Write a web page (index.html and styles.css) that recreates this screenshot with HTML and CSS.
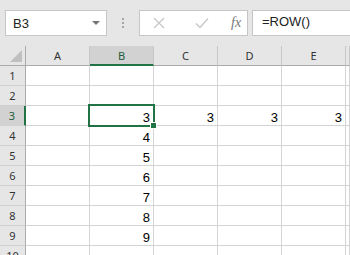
FILE: index.html
```html
<!DOCTYPE html>
<html lang="en">
<head>
    <meta charset="UTF-8">
    <title>Sheet - ROW()</title>
    <link rel="stylesheet" href="styles.css">
</head>
<body>
    <!-- Formula bar -->
    <div class="toolbar">
        <div class="name-box">
            <span>B3</span>
            <span class="caret"></span>
        </div>
        <div class="grip"><i></i><i></i><i></i></div>
        <div class="actions">
            <svg width="12" height="12" viewBox="0 0 12 12"><path d="M1 1L11 11M11 1L1 11" stroke="#c8c8c8" stroke-width="1.4" fill="none"/></svg>
            <svg width="14" height="12" viewBox="0 0 14 12"><path d="M1 6.5L5 10.5L13 1.5" stroke="#c8c8c8" stroke-width="1.4" fill="none"/></svg>
            <span class="fx">fx</span>
        </div>
        <div class="formula">=ROW()</div>
    </div>

    <!-- Grid -->
    <div class="sheet">
        <div class="corner"><span></span></div>
        <div class="col-head">A</div>
        <div class="col-head active">B</div>
        <div class="col-head">C</div>
        <div class="col-head">D</div>
        <div class="col-head">E</div>
        <div class="col-head"></div>

        <div class="row-head">1</div>
        <div class="cell"></div><div class="cell"></div><div class="cell"></div><div class="cell"></div><div class="cell"></div><div class="cell"></div>

        <div class="row-head">2</div>
        <div class="cell"></div><div class="cell"></div><div class="cell"></div><div class="cell"></div><div class="cell"></div><div class="cell"></div>

        <div class="row-head active">3</div>
        <div class="cell"></div><div class="cell">3</div><div class="cell">3</div><div class="cell">3</div><div class="cell">3</div><div class="cell"></div>

        <div class="row-head">4</div>
        <div class="cell"></div><div class="cell">4</div><div class="cell"></div><div class="cell"></div><div class="cell"></div><div class="cell"></div>

        <div class="row-head">5</div>
        <div class="cell"></div><div class="cell">5</div><div class="cell"></div><div class="cell"></div><div class="cell"></div><div class="cell"></div>

        <div class="row-head">6</div>
        <div class="cell"></div><div class="cell">6</div><div class="cell"></div><div class="cell"></div><div class="cell"></div><div class="cell"></div>

        <div class="row-head">7</div>
        <div class="cell"></div><div class="cell">7</div><div class="cell"></div><div class="cell"></div><div class="cell"></div><div class="cell"></div>

        <div class="row-head">8</div>
        <div class="cell"></div><div class="cell">8</div><div class="cell"></div><div class="cell"></div><div class="cell"></div><div class="cell"></div>

        <div class="row-head">9</div>
        <div class="cell"></div><div class="cell">9</div><div class="cell"></div><div class="cell"></div><div class="cell"></div><div class="cell"></div>

        <div class="row-head">10</div>
        <div class="cell"></div><div class="cell"></div><div class="cell"></div><div class="cell"></div><div class="cell"></div><div class="cell"></div>

        <!-- Selected cell B3 -->
        <div class="selection"><span class="handle"></span></div>
    </div>
</body>
</html>
```

FILE: styles.css
```css
body {
    margin: 0;
    width: 350px;
    height: 255px;
    overflow: hidden;
    background-color: #fff;
    font-family: "Liberation Sans", Arial, sans-serif;
}

.toolbar {
    height: 46px;
    box-sizing: border-box;
    padding: 10px 0 0 5px;
    background-color: #e6e6e6;
    display: flex;
    align-items: flex-start;
}

.name-box,
.actions,
.formula {
    height: 26px;
    box-sizing: border-box;
    background-color: #fff;
    border: 1px solid #c6c6c6;
}

.name-box {
    width: 102px;
    display: flex;
    align-items: center;
    justify-content: space-between;
    padding: 0 6px 0 7px;
    font-size: 13px;
    color: #222;
}

.caret {
    width: 0;
    height: 0;
    border-left: 4px solid transparent;
    border-right: 4px solid transparent;
    border-top: 4px solid #777;
}

.grip {
    width: 32px;
    height: 26px;
    display: flex;
    flex-direction: column;
    align-items: center;
    justify-content: center;
    gap: 2px;
}

.grip i {
    display: block;
    width: 2px;
    height: 2px;
    background-color: #a6a6a6;
}

.actions {
    width: 109px;
    display: flex;
    align-items: center;
    padding-left: 13px;
    gap: 0;
}

.actions svg:first-child {
    margin-right: 30px;
}

.fx {
    margin-left: 22px;
    font-family: "Liberation Serif", "Times New Roman", serif;
    font-style: italic;
    font-size: 14px;
    color: #777;
}

.formula {
    flex: 1;
    margin-left: 4px;
    border-right: none;
    padding: 3px 0 0 9px;
    font-size: 13px;
    color: #222;
}

.sheet {
    position: relative;
    display: grid;
    grid-template-columns: 26px repeat(5, 64px) 1fr;
    grid-auto-rows: 20px;
}

.sheet > div {
    box-sizing: border-box;
}

.corner {
    position: relative;
    background-color: #e6e6e6;
    border-right: 1px solid #ababab;
    border-bottom: 1px solid #ababab;
}

.corner span {
    position: absolute;
    right: 3px;
    bottom: 3px;
    width: 0;
    height: 0;
    border-left: 12px solid transparent;
    border-bottom: 12px solid #c0c0c0;
}

.col-head {
    background-color: #e6e6e6;
    border-right: 1px solid #c8c8c8;
    border-bottom: 1px solid #ababab;
    font-family: "Noto Sans", "Open Sans", sans-serif;
    font-size: 11px;
    color: #333;
    text-align: center;
    line-height: 19px;
}

.col-head.active {
    background-color: #d2d2d2;
    border-bottom: 2px solid #217346;
    color: #1e5b3a;
}

.row-head {
    background-color: #e6e6e6;
    border-right: 1px solid #ababab;
    border-bottom: 1px solid #d0d0d0;
    font-family: "Noto Sans", "Open Sans", sans-serif;
    font-size: 11px;
    color: #333;
    text-align: center;
    line-height: 20px;
}

.row-head.active {
    background-color: #d2d2d2;
    border-right: 2px solid #217346;
    color: #1e5b3a;
}

.cell {
    border-right: 1px solid #d4d4d4;
    border-bottom: 1px solid #d4d4d4;
    font-size: 13px;
    color: #000;
    text-align: right;
    padding: 4px 3px 0 0;
    line-height: 15px;
}

.selection {
    position: absolute;
    left: 88px;
    top: 58px;
    width: 67px;
    height: 23px;
    box-sizing: border-box;
    border: 2px solid #217346;
}

.handle {
    position: absolute;
    right: -4px;
    bottom: -4px;
    width: 5px;
    height: 5px;
    background-color: #217346;
    border: 1px solid #fff;
}
```
